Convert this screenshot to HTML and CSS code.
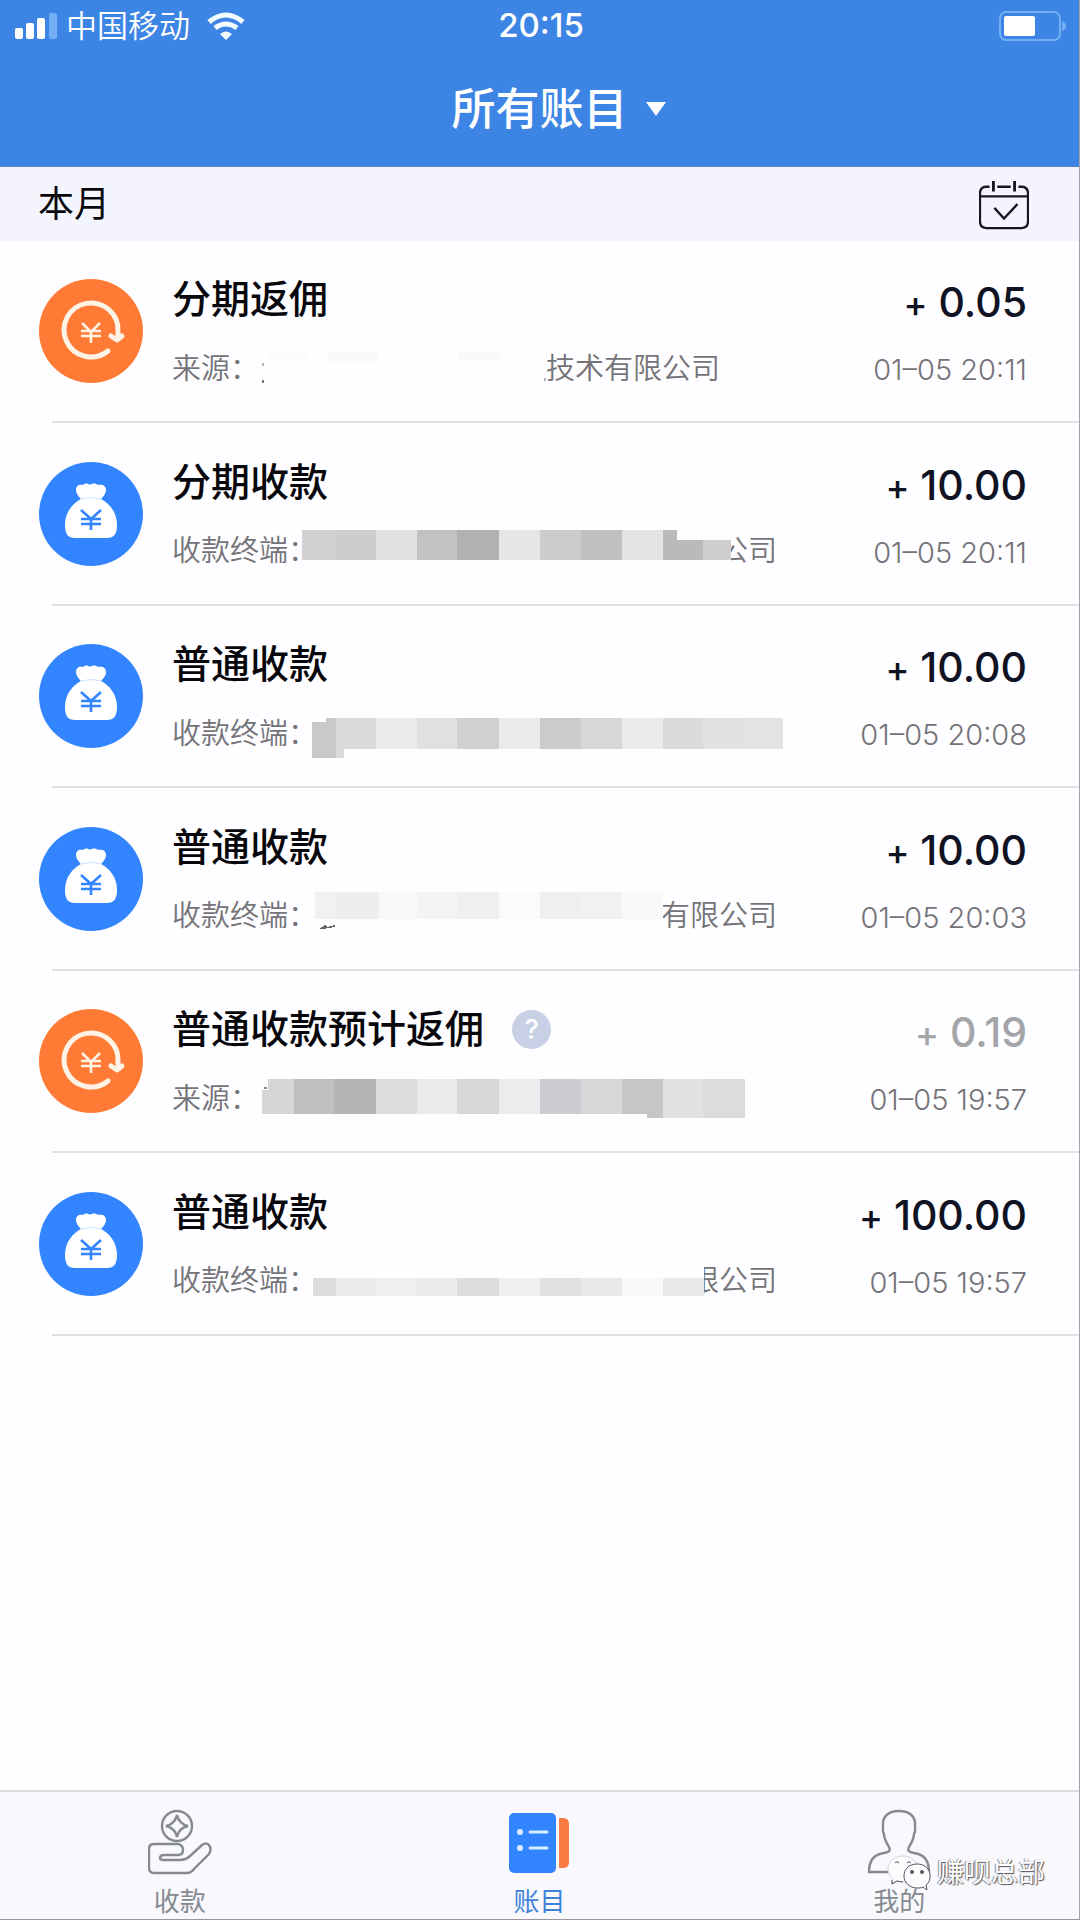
FILE: index.html
```html
<!DOCTYPE html>
<html lang="zh-CN">
<head>
    <meta charset="UTF-8">
    <meta name="viewport" content="width=device-width, initial-scale=1.0">
    <title>所有账目</title>
    <link rel="stylesheet" href="styles.css">
</head>
<body>

    <!-- shared symbols -->
    <svg class="sprite" aria-hidden="true">
        <symbol id="icon-bag" viewBox="0 0 104 104">
            <circle cx="52" cy="52" r="52" fill="#3385ff"/>
            <path fill="#fff" d="M42 37 C39 34 37 31 37 28 C37 24 40 22 44 23 C46 21 49 21 51 23 C53 21 57 21 59 23 C64 22 67 24 67 28 C67 31 65 34 62 37 C70 41 78 50 78 63 C78 72 75 76 68 76 H36 C29 76 26 72 26 63 C26 50 34 41 42 37 Z"/>
            <path fill="none" stroke="#cfe2ff" stroke-width="1" d="M41 37 Q52 34 63 37"/>
            <path fill="none" stroke="#3385ff" stroke-width="2.6" d="M42 48 L52 57 L62 48 M42 57 H62 M42 62 H62 M52 56 V68"/>
        </symbol>
        <symbol id="icon-rebate" viewBox="0 0 104 104">
            <circle cx="52" cy="52" r="52" fill="#ff7a35"/>
            <path fill="none" stroke="#fff3e6" stroke-width="5" stroke-linecap="round" d="M69 72 A27 27 0 1 1 79 53 V59"/>
            <path fill="none" stroke="#fff3e6" stroke-width="5" stroke-linecap="round" stroke-linejoin="round" d="M72 57 L78 61 L83 57"/>
            <path fill="none" stroke="#fff3e6" stroke-width="2.6" d="M43 44 L52 53 L61 44 M42 52 H62 M42 57 H62 M52 52 V64"/>
        </symbol>
    </svg>

    <div class="app">
        <header class="header">
            <div class="status">
                <div class="carrier">
                    <svg width="42" height="28" viewBox="0 0 42 28">
                        <rect x="0" y="16" width="8" height="11" rx="2" fill="#fff"/>
                        <rect x="11" y="11" width="8" height="16" rx="2" fill="#fff"/>
                        <rect x="22" y="6" width="8" height="21" rx="2" fill="#fff"/>
                        <rect x="34" y="1" width="8" height="26" rx="2" fill="#74aef5"/>
                    </svg>
                    <span>中国移动</span>
                    <svg class="wifi" width="38" height="28" viewBox="0 0 38 28">
                        <path fill="none" stroke="#f2fcff" stroke-width="5" d="M2 10 Q19 -4 36 10"/>
                        <path fill="none" stroke="#f2fcff" stroke-width="5" d="M8 16 Q19 8 30 16"/>
                        <path fill="#f2fcff" d="M13 22 Q19 17 25 22 L19 28 Z"/>
                    </svg>
                </div>
                <time class="clock">20:15</time>
                <svg class="battery" width="68" height="30" viewBox="0 0 68 30">
                    <rect x="1" y="1" width="60" height="28" rx="6" fill="none" stroke="#74aef5" stroke-width="2"/>
                    <rect x="5" y="5" width="31" height="20" rx="2" fill="#fff"/>
                    <path fill="#74aef5" d="M63 10 Q67 12 67 15 Q67 18 63 20 Z"/>
                </svg>
            </div>
            <button class="title" type="button">
                <span>所有账目</span>
                <svg width="20" height="14" viewBox="0 0 20 14"><path fill="#fff" d="M0 0 H20 L10 14 Z"/></svg>
            </button>
        </header>

        <main>
            <div class="month">
                <h2>本月</h2>
                <button type="button" aria-label="日历">
                    <svg width="50" height="50" viewBox="0 0 52 50" fill="none" stroke="#15161f" stroke-width="2.4">
                        <path d="M11 6 H8 Q1 6 1 13 V42 Q1 49 8 49 H44 Q51 49 51 42 V13 Q51 6 44 6 H41"/>
                        <path d="M19 6 H33 M1 16 H51"/>
                        <path stroke-width="3" d="M15 0 V11 M37 0 V11"/>
                        <path d="M16 28 L26 39 L40 24"/>
                    </svg>
                </button>
            </div>

            <ul class="records">
                <li class="record">
                    <svg class="icon"><use href="#icon-rebate"/></svg>
                    <div class="info">
                        <h3>分期返佣</h3>
                        <p>来源：<svg class="mosaic" width="287" height="52" viewBox="259 -26 287 52">
                            <rect x="268" y="-17" width="40" height="7" fill="#fbfafc"/>
                            <rect x="328" y="-17" width="50" height="9" fill="#f8f7f9"/>
                            <rect x="459" y="-17" width="41" height="8" fill="#f9f8fa"/>
                            <rect x="262" y="-6" width="2" height="3" fill="#b5b4b8"/>
                            <rect x="262" y="11" width="2" height="3" fill="#77767a"/>
                            <rect x="544" y="9" width="2" height="3" fill="#b5b4b8"/>
                        </svg>技术有限公司</p>
                    </div>
                    <div class="sum">
                        <strong><i>+</i> 0.05</strong>
                        <time>01–05 20:11</time>
                    </div>
                </li>
                <li class="record">
                    <svg class="icon"><use href="#icon-bag"/></svg>
                    <div class="info">
                        <h3>分期收款</h3>
                        <p>收款终端：<svg class="mosaic" width="402" height="52" viewBox="317 -26 402 52">
                            <rect x="712" y="-16" width="19" height="34" fill="#fefdff"/>
                            <rect x="302" y="-22" width="34" height="30" fill="#d2d0d3"/>
                            <rect x="336" y="-22" width="40" height="30" fill="#cdcccf"/>
                            <rect x="376" y="-22" width="41" height="30" fill="#e2e1e4"/>
                            <rect x="417" y="-22" width="40" height="30" fill="#c3c1c4"/>
                            <rect x="457" y="-22" width="42" height="30" fill="#b2b0b3"/>
                            <rect x="499" y="-22" width="41" height="30" fill="#e6e5e7"/>
                            <rect x="540" y="-22" width="41" height="30" fill="#cccbce"/>
                            <rect x="581" y="-22" width="41" height="30" fill="#c1bfc2"/>
                            <rect x="622" y="-22" width="41" height="30" fill="#e3e2e4"/>
                            <path d="M663 -22 H677 V-12 H703 V8 H663 Z" fill="#bbb9bc"/>
                            <rect x="703" y="-12" width="28" height="20" fill="#d0ced1"/>
                        </svg>公司</p>
                    </div>
                    <div class="sum">
                        <strong><i>+</i> 10.00</strong>
                        <time>01–05 20:11</time>
                    </div>
                </li>
                <li class="record">
                    <svg class="icon"><use href="#icon-bag"/></svg>
                    <div class="info">
                        <h3>普通收款</h3>
                        <p>收款终端：<svg class="mosaic" width="466" height="52" viewBox="317 -26 466 52">
                            <path d="M312 -12 H326 V-16 H336 V24 H312 Z" fill="#c9c8cb"/>
                            <path d="M336 -16 H376 V15 H344 V24 H336 Z" fill="#dad9dc"/>
                            <rect x="376" y="-16" width="41" height="31" fill="#ebeaec"/>
                            <rect x="417" y="-16" width="40" height="31" fill="#e0dfe2"/>
                            <rect x="457" y="-16" width="42" height="31" fill="#d0cfd2"/>
                            <rect x="499" y="-16" width="41" height="31" fill="#ebeaec"/>
                            <rect x="540" y="-16" width="41" height="31" fill="#cbcacd"/>
                            <rect x="581" y="-16" width="41" height="31" fill="#d7d6d9"/>
                            <rect x="622" y="-16" width="41" height="31" fill="#ebeaec"/>
                            <rect x="663" y="-16" width="40" height="31" fill="#dbdadd"/>
                            <rect x="703" y="-16" width="41" height="31" fill="#e1e0e3"/>
                            <rect x="744" y="-16" width="39" height="31" fill="#e3e2e5"/>
                        </svg></p>
                    </div>
                    <div class="sum">
                        <strong><i>+</i> 10.00</strong>
                        <time>01–05 20:08</time>
                    </div>
                </li>
                <li class="record">
                    <svg class="icon"><use href="#icon-bag"/></svg>
                    <div class="info">
                        <h3>普通收款</h3>
                        <p>收款终端：<svg class="mosaic" width="344" height="52" viewBox="317 -26 344 52">
                            <rect x="315" y="-25" width="21" height="27" fill="#f1f0f3"/>
                            <rect x="336" y="-25" width="43" height="27" fill="#eeedf0"/>
                            <rect x="379" y="-25" width="38" height="27" fill="#f9f8fb"/>
                            <rect x="417" y="-25" width="40" height="27" fill="#f4f3f6"/>
                            <rect x="457" y="-25" width="42" height="27" fill="#efeef1"/>
                            <rect x="499" y="-25" width="41" height="27" fill="#fbfafc"/>
                            <rect x="540" y="-25" width="41" height="27" fill="#efeef1"/>
                            <rect x="581" y="-25" width="41" height="27" fill="#f1f0f3"/>
                            <rect x="622" y="-25" width="41" height="27" fill="#f9f8fb"/>
                            <path d="M319 12 L325 8 L327 10 L335 8 V10 L323 12 Z" fill="#66656a"/>
                        </svg>有限公司</p>
                    </div>
                    <div class="sum">
                        <strong><i>+</i> 10.00</strong>
                        <time>01–05 20:03</time>
                    </div>
                </li>
                <li class="record pending">
                    <svg class="icon"><use href="#icon-rebate"/></svg>
                    <div class="info">
                        <h3>普通收款预计返佣 <button class="help" type="button">?</button></h3>
                        <p>来源：<svg class="mosaic" width="486" height="52" viewBox="259 -26 486 52">
                            <path d="M262 -9 H268 V-20 H294 V15 H262 Z" fill="#d6d5d8"/>
                            <rect x="294" y="-20" width="40" height="35" fill="#c0bec1"/>
                            <rect x="334" y="-20" width="42" height="35" fill="#b6b4b7"/>
                            <rect x="376" y="-20" width="41" height="35" fill="#dddcdf"/>
                            <rect x="417" y="-20" width="40" height="35" fill="#ebeaec"/>
                            <rect x="457" y="-20" width="42" height="35" fill="#d7d6d9"/>
                            <rect x="499" y="-20" width="41" height="35" fill="#ecebed"/>
                            <rect x="540" y="-20" width="41" height="35" fill="#cdccd0"/>
                            <rect x="581" y="-20" width="41" height="35" fill="#d7d6d9"/>
                            <path d="M622 -20 H663 V19 H647 V15 H622 Z" fill="#c6c5c8"/>
                            <rect x="663" y="-20" width="40" height="39" fill="#e2e1e4"/>
                            <rect x="703" y="-20" width="42" height="39" fill="#dcdbde"/>
                            <rect x="264" y="-12" width="3" height="2" fill="#8b8a8f"/>
                        </svg></p>
                    </div>
                    <div class="sum">
                        <strong><i>+</i> 0.19</strong>
                        <time>01–05 19:57</time>
                    </div>
                </li>
                <li class="record">
                    <svg class="icon"><use href="#icon-bag"/></svg>
                    <div class="info">
                        <h3>普通收款</h3>
                        <p>收款终端：<svg class="mosaic" width="373" height="52" viewBox="317 -26 373 52">
                            <rect x="688" y="-16" width="16" height="34" fill="#fefdff"/>
                            <rect x="313" y="-4" width="23" height="18" fill="#dcdbde"/>
                            <rect x="336" y="-4" width="40" height="18" fill="#ebeaec"/>
                            <rect x="376" y="-4" width="41" height="18" fill="#efeef1"/>
                            <rect x="417" y="-4" width="40" height="18" fill="#ebeaec"/>
                            <rect x="457" y="-4" width="42" height="18" fill="#dcdbde"/>
                            <rect x="499" y="-4" width="41" height="18" fill="#f0eff2"/>
                            <rect x="540" y="-4" width="41" height="18" fill="#e1e0e3"/>
                            <rect x="581" y="-4" width="41" height="18" fill="#e9e8eb"/>
                            <rect x="622" y="-4" width="41" height="18" fill="#f9f8fb"/>
                            <rect x="663" y="-4" width="41" height="18" fill="#e9e8eb"/>
                        </svg>限公司</p>
                    </div>
                    <div class="sum">
                        <strong><i>+</i> 100.00</strong>
                        <time>01–05 19:57</time>
                    </div>
                </li>
            </ul>
        </main>

        <nav class="tabs">
            <a href="#">
                <svg width="64" height="66" viewBox="0 0 64 66" fill="none" stroke="#858a92" stroke-width="2.4">
                    <circle cx="29" cy="17" r="15"/>
                    <path d="M29 6 Q31 15 40 17 Q31 19 29 28 Q27 19 18 17 Q27 15 29 6 Z"/>
                    <path d="M6 35 H30 Q35 36 35 41 Q35 46 30 46 H16 Q12 46 12 49 Q12 51 16 51 H32 Q37 51 41 48 L54 36 Q58 33 61 36 Q64 40 61 45 L46 60 Q43 64 39 64 H6 Q1 64 1 59 V40 Q1 35 6 35 Z"/>
                </svg>
                <span>收款</span>
            </a>
            <a href="#" class="active">
                <svg width="60" height="66" viewBox="0 0 60 66">
                    <rect x="0" y="4" width="47" height="60" rx="5" fill="#3385ff"/>
                    <path fill="#f77b42" d="M50 9 H54 Q60 9 60 15 V53 Q60 59 54 59 H50 Z"/>
                    <circle cx="11" cy="23" r="3" fill="#d3f2ff"/>
                    <circle cx="11" cy="39" r="3" fill="#d3f2ff"/>
                    <path stroke="#d3f2ff" stroke-width="3" stroke-linecap="round" d="M21 23 H38 M21 39 H38"/>
                </svg>
                <span>账目</span>
            </a>
            <a href="#">
                <svg width="64" height="66" viewBox="0 0 64 66" fill="none" stroke="#858a92" stroke-width="2.4">
                    <path d="M2 63 H62 C62 50 55 45 47 44 C42 43 40 42 42 38 C45 33 47 30 47 25 C49 22 48 20 48 17 C49 7 42 2 32 2 C22 2 15 7 16 17 C16 20 15 22 17 25 C17 30 19 33 22 38 C24 42 22 43 17 44 C9 45 2 50 2 63 Z"/>
                </svg>
                <span>我的</span>
            </a>
        </nav>

        <div class="watermark">
            <svg width="44" height="36" viewBox="0 0 44 36">
                <path fill="#fcfbfe" stroke="#d5d5da" stroke-width="1" d="M16 1 C7 1 1 7 1 14 C1 18 3 21 6 24 L5 29 L10 26 C12 27 14 27 17 27 C25 27 31 21 31 14 C31 7 25 1 16 1 Z"/>
                <path fill="none" stroke="#55555c" d="M5 25 L5 29 L10 26 L16 27 M8 8 Q10 5 12 8 M20 8 Q22 5 24 8"/>
                <path fill="#fcfbfe" stroke="#55555c" stroke-width="1" d="M30 9 C22 9 17 14 17 21 C17 28 23 33 30 33 C32 33 34 33 36 32 L40 35 L39 30 C42 28 43 25 43 21 C43 14 38 9 30 9 Z"/>
                <circle cx="25" cy="17" r="2" fill="#55555c"/>
                <circle cx="35" cy="17" r="2" fill="#55555c"/>
            </svg>
            <span>赚呗总部</span>
        </div>
    </div>

</body>
</html>
```
FILE: styles.css
```css
* {
    box-sizing: border-box;
}
body {
    margin: 0;
    background: #fefdff;
    color: #08080c;
    font-family: Inter, "Noto Sans CJK SC", sans-serif;
    line-height: 1.2;
}
h2, h3, p, ul {
    margin: 0;
    padding: 0;
}
button {
    padding: 0;
    border: none;
    background: none;
    color: inherit;
    font: inherit;
    cursor: pointer;
}
svg {
    display: block;
    flex: none;
}
.sprite {
    position: absolute;
    width: 0;
    height: 0;
}
.app {
    position: relative;
    display: flex;
    flex-direction: column;
    min-height: 100vh;
    border-right: 1px solid #a3a2aa;
    border-bottom: 1px solid #98979d;
}
main {
    flex: 1;
}

/* header */
.header {
    background: #3d85e4;
    border-bottom: 1px solid #5684bd;
    color: #fff;
}
.status {
    display: grid;
    grid-template-columns: 1fr auto 1fr;
    align-items: center;
    height: 52px;
    padding: 0 12px 0 15px;
}
.carrier {
    display: flex;
    align-items: center;
    gap: 9px;
    font-size: 31px;
    font-weight: 350;
}
.carrier .wifi {
    margin-left: 8px;
}
.clock {
    font-size: 33px;
    font-weight: 500;
}
.battery {
    justify-self: end;
}
.title {
    display: grid;
    grid-template-columns: 1fr auto 1fr;
    align-items: center;
    gap: 18px;
    width: 100%;
    height: 114px;
    font-size: 44px;
    font-weight: 500;
}
.title span {
    grid-column: 2;
}

/* month bar */
.month {
    display: flex;
    align-items: center;
    justify-content: space-between;
    height: 74px;
    padding: 2px 50px 0 38px;
    background: #f4f4fd;
}
.month h2 {
    font-size: 36px;
    font-weight: 400;
}

/* records */
.records {
    list-style: none;
}
.record {
    display: flex;
    align-items: center;
    min-height: 182px;
    margin-left: 52px;
    padding-right: 52px;
    border-bottom: 2px solid #e0dfe3;
}
.record:nth-child(even) {
    min-height: 183px;
}
.icon {
    width: 104px;
    height: 104px;
    margin-left: -13px;
}
.info {
    flex: 1;
    margin-left: 29px;
}
.info h3 {
    display: flex;
    align-items: center;
    gap: 28px;
    font-size: 39px;
    line-height: 46px;
    font-weight: 500;
}
.info p {
    display: flex;
    align-items: center;
    height: 34px;
    margin-top: 30px;
    color: #747378;
    font-size: 29px;
    font-weight: 350;
    white-space: nowrap;
}
.mosaic {
    position: relative;
    overflow: visible;
    shape-rendering: crispEdges;
}
.help {
    width: 39px;
    height: 39px;
    border-radius: 50%;
    background: #c8d0e5;
    color: #fff;
    font-size: 27px;
    line-height: 39px;
}
.sum {
    text-align: right;
}
.sum strong {
    display: block;
    padding-top: 4px;
    color: #0f1324;
    font-size: 41px;
    line-height: 46px;
    font-weight: 500;
}
.sum i {
    font-size: 36px;
    font-style: normal;
}
.sum time {
    display: block;
    margin-top: 26px;
    color: #747378;
    font-size: 29px;
    line-height: 34px;
    font-weight: 350;
}
.pending strong {
    color: #a3a5a8;
}

/* tab bar */
.tabs {
    display: grid;
    grid-template-columns: repeat(3, 1fr);
    height: 129px;
    border-top: 2px solid #dcdbdf;
    background: #f9f8fc;
}
.tabs a {
    display: flex;
    flex-direction: column;
    align-items: center;
    gap: 10px;
    padding-top: 17px;
    color: #858a92;
    font-size: 26px;
    line-height: 34px;
    text-decoration: none;
}
.tabs .active {
    color: #3f83d8;
}

.watermark {
    position: absolute;
    right: 34px;
    bottom: 28px;
    display: flex;
    align-items: center;
    gap: 6px;
    color: #fff;
    font-size: 27px;
    text-shadow: 1px 1px 1px #55555c, -1px 0 1px #8c8c92;
}
```
